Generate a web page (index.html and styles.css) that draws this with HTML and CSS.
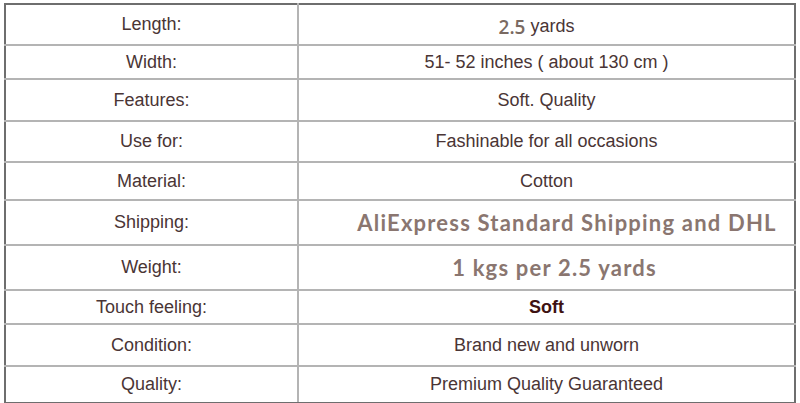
FILE: index.html
```html
<!DOCTYPE html>
<html>
<head>
<meta charset="utf-8">
<link rel="stylesheet" href="styles.css">
</head>
<body>
<table class="spec">
  <colgroup><col class="c-label"><col class="c-value"></colgroup>
  <tr class="r1"><td>Length:</td><td class="len"><span class="num">2.5</span> yards</td></tr>
  <tr class="r2"><td>Width:</td><td>51- 52 inches ( about 130 cm )</td></tr>
  <tr class="r3"><td>Features:</td><td>Soft. Quality</td></tr>
  <tr class="r4"><td>Use for:</td><td>Fashinable for all occasions</td></tr>
  <tr class="r5"><td>Material:</td><td>Cotton</td></tr>
  <tr class="r6"><td>Shipping:</td><td class="big ship">AliExpress Standard Shipping and DHL</td></tr>
  <tr class="r7"><td>Weight:</td><td class="big weight">1 kgs per 2.5 yards</td></tr>
  <tr class="r8"><td>Touch feeling:</td><td class="soft">Soft</td></tr>
  <tr class="r9"><td>Condition:</td><td>Brand new and unworn</td></tr>
  <tr class="r10"><td>Quality:</td><td>Premium Quality Guaranteed</td></tr>
</table>
</body>
</html>
```

FILE: styles.css
```css
html, body {
  margin: 0;
  padding: 0;
  background: #ffffff;
}
body {
  padding: 3px 4px 0 4px;
}
.spec {
  width: 792px;
  height: 399px;
  border-collapse: collapse;
  table-layout: fixed;
  border: 2px solid #6e6e6e;
  font-family: "Liberation Sans", Arial, sans-serif;
  font-size: 18px;
  color: #4a3535;
}
.c-label { width: 293px; }
.spec td {
  border: 2px solid #b4b4b4;
  text-align: center;
  vertical-align: middle;
  padding: 0;
}
.spec tr:first-child td { border-top: 2px solid #6e6e6e; }
.spec tr:last-child td { border-bottom: 2px solid #6e6e6e; }
.spec td:first-child { border-left: 2px solid #6e6e6e; }
.spec td:last-child { border-right: 2px solid #6e6e6e; }
.r1 { height: 41px; }
.r2 { height: 34px; }
.r3 { height: 42px; }
.r4 { height: 41px; }
.r5 { height: 38px; }
.r6 { height: 45px; }
.r7 { height: 45px; }
.r8 { height: 34px; }
.r9 { height: 42px; }
.r10 { height: 37px; }
.spec td.len { padding-right: 20px; }
.num {
  font-family: "Open Sans", sans-serif;
  font-weight: 600;
  font-size: 19px;
  color: #7a6a62;
  position: relative;
  top: 2px;
}
.big {
  font-family: Lato, "Open Sans", sans-serif;
  font-weight: 700;
  font-size: 22px;
  letter-spacing: 1.2px;
  color: #8a7670;
}
.spec td.ship { padding-left: 41px; }
.spec td.weight { padding-left: 16px; }
.soft {
  font-weight: 700;
  color: #3e1212;
}
```
